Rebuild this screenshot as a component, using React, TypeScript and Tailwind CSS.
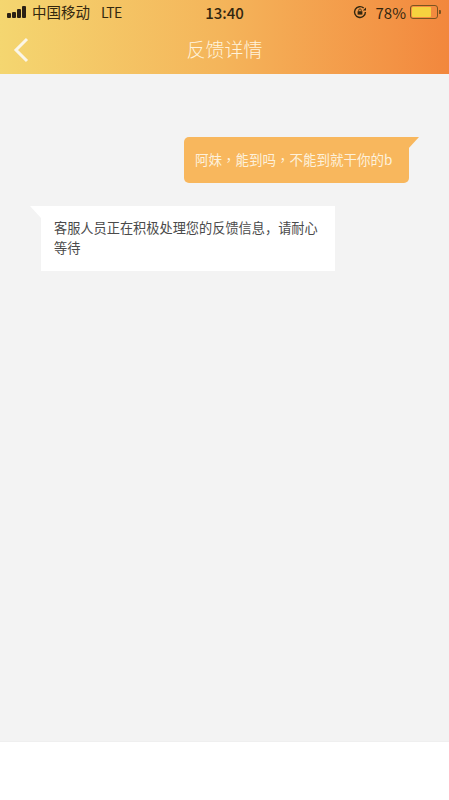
import React from 'react';

const font = { fontFamily: '"Noto Sans CJK SC", "Liberation Sans", sans-serif' };
const fontTC = { fontFamily: '"Noto Sans CJK TC", "Liberation Sans", sans-serif' };

const StatusBar: React.FC = () => (
    <div className="flex items-center h-[24px] pl-[7px] pr-[8px] text-[#33270f] relative">
        <div className="flex items-end gap-[1px] h-[12px] w-[20px]">
            <span className="w-[4px] h-[5px] bg-[#2a2015] rounded-[1px]" />
            <span className="w-[4px] h-[6px] bg-[#2a2015] rounded-[1px]" />
            <span className="w-[4px] h-[9px] bg-[#2a2015] rounded-[1px]" />
            <span className="w-[4px] h-[12px] bg-[#2a2015] rounded-[1px]" />
        </div>
        <span className="ml-[5px] text-[14.5px] leading-none">中国移动</span>
        <span className="ml-[11px] text-[14px] leading-none tracking-[-0.5px]">LTE</span>
        <span className="absolute left-0 right-0 text-center text-[15px] font-medium leading-none">13:40</span>
        <div className="ml-auto flex items-center">
            <svg width="14" height="14" viewBox="0 0 14 14" fill="none" stroke="#33270f">
                <path d="M12.4 7a5.4 5.4 0 1 1-1.7-3.9" strokeWidth="1.4" />
                <path d="M13 2.4v3.2H9.8z" fill="#33270f" stroke="none" />
                <rect x="4.6" y="6.2" width="4.8" height="3.4" fill="#33270f" stroke="none" />
                <path d="M5.7 6.2V5.2a1.3 1.3 0 0 1 2.6 0v1" strokeWidth="0.8" />
            </svg>
            <span className="ml-[9px] text-[15px] leading-none">78%</span>
            <div className="ml-[4px] flex items-center">
                <div className="w-[28px] h-[14px] rounded-[3px] border border-[#7a5420] p-[1px]">
                    <div className="w-[78%] h-full rounded-[1px] bg-[#f6d23f]" />
                </div>
                <span className="w-[2px] h-[4px] bg-[#7a5420] rounded-r-[1px] ml-[1px]" />
            </div>
        </div>
    </div>
);

export default function App() {
    return (
        <div style={font} className="w-[449px] h-[800px] flex flex-col bg-white overflow-hidden">
            <div className="h-[74px] shrink-0 bg-gradient-to-r from-[#f4d670] via-[#f4b45a] to-[#f2873d]">
                <StatusBar />
                <div className="relative flex items-center justify-center h-[48px]">
                    <svg className="absolute left-[12px] top-[13px]" width="18" height="26" viewBox="0 0 18 26" fill="none">
                        <path d="M15 2L4 13L15 24" stroke="#fbf6e8" strokeWidth="3" />
                    </svg>
                    <span className="text-[19px] font-light text-[#fff3dc] leading-none">反馈详情</span>
                </div>
            </div>

            <div className="h-[668px] shrink-0 bg-[#f3f3f3] border-b border-[#efefef] pt-[63px]">
                <div className="flex justify-end pr-[30px]">
                    <div className="relative w-[235px] h-[46px]">
                        <div style={fontTC} className="w-[225px] h-full bg-[#f8b75d] rounded-b-[5px] rounded-tl-[5px] flex items-center pl-[11px] pb-[2px] text-[13.5px] text-[#fdf1dc] whitespace-nowrap">
                            阿妹，能到吗，不能到就干你的b
                        </div>
                        <svg className="absolute right-0 top-0" width="11" height="12" viewBox="0 0 11 12">
                            <path d="M0 0H11L0 12Z" fill="#f8b75d" />
                        </svg>
                    </div>
                </div>

                <div className="flex pl-[30px] mt-[23px]">
                    <svg className="shrink-0" width="11" height="12" viewBox="0 0 11 12">
                        <path d="M11 0H0L11 12Z" fill="#ffffff" />
                    </svg>
                    <div className="w-[294px] h-[65px] bg-white pl-[13px] pr-[10px] pt-[12px] text-[13.2px] leading-[20px] text-[#4a4a4a]">
                        客服人员正在积极处理您的反馈信息，请耐心等待
                    </div>
                </div>
            </div>

            <div className="flex-1 bg-white" />
        </div>
    );
}
